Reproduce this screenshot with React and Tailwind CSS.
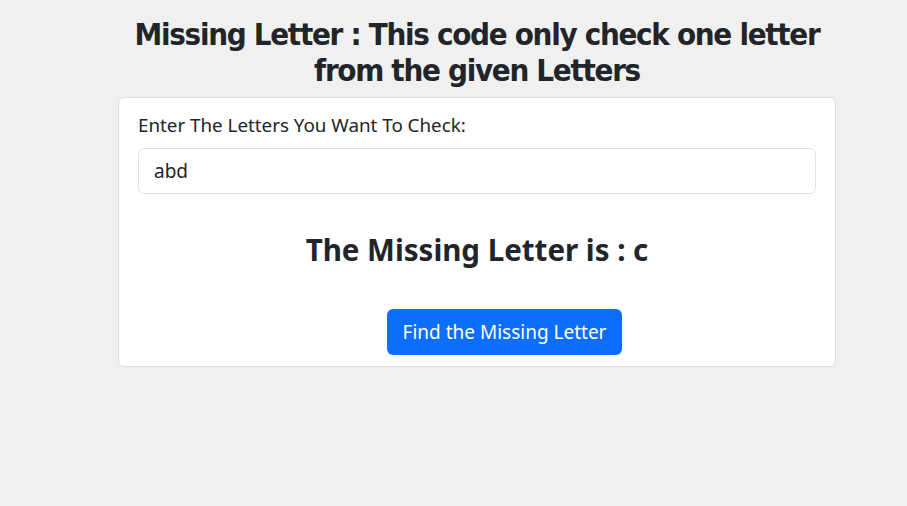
export default function App() {
  return (
    <div className="min-h-[506px] w-full bg-[#f0f0f0]" style={{ fontFamily: '"Noto Sans", sans-serif' }}>
      <div className="ml-[118px] w-[718px] pt-[16px]">
        <h1
          className="mx-auto w-[718px] text-center text-[31px] leading-[36px] tracking-[-1.3px] text-[#212529]"
          style={{ fontFamily: '"DejaVu Sans Condensed", "DejaVu Sans", sans-serif', fontWeight: 700 }}
        >
          Missing Letter : This code only check one letter from the given Letters
        </h1>
        <div className="mt-[9px] rounded-[6px] border border-[#dcdcdc] bg-white px-[19px] pt-[14px] pb-[11px]">
          <label className="block text-[18.8px] leading-[26px] text-[#212529]">Enter The Letters You Want To Check:</label>
          <div className="mt-[10px] flex h-[46px] items-center rounded-[6px] border border-[#dee2e6] bg-white px-[15px] text-[19px] text-[#212529]">
            abd
          </div>
          <h2 className="mt-[36px] text-center text-[29.5px] font-bold leading-[40px] text-[#212529]">The Missing Letter is : c</h2>
          <div className="mt-[39px] flex justify-center pl-[55px]">
            <button className="h-[46px] rounded-[6px] bg-[#0d6efd] px-[16px] text-[19px] text-white">Find the Missing Letter</button>
          </div>
        </div>
      </div>
    </div>
  );
}
